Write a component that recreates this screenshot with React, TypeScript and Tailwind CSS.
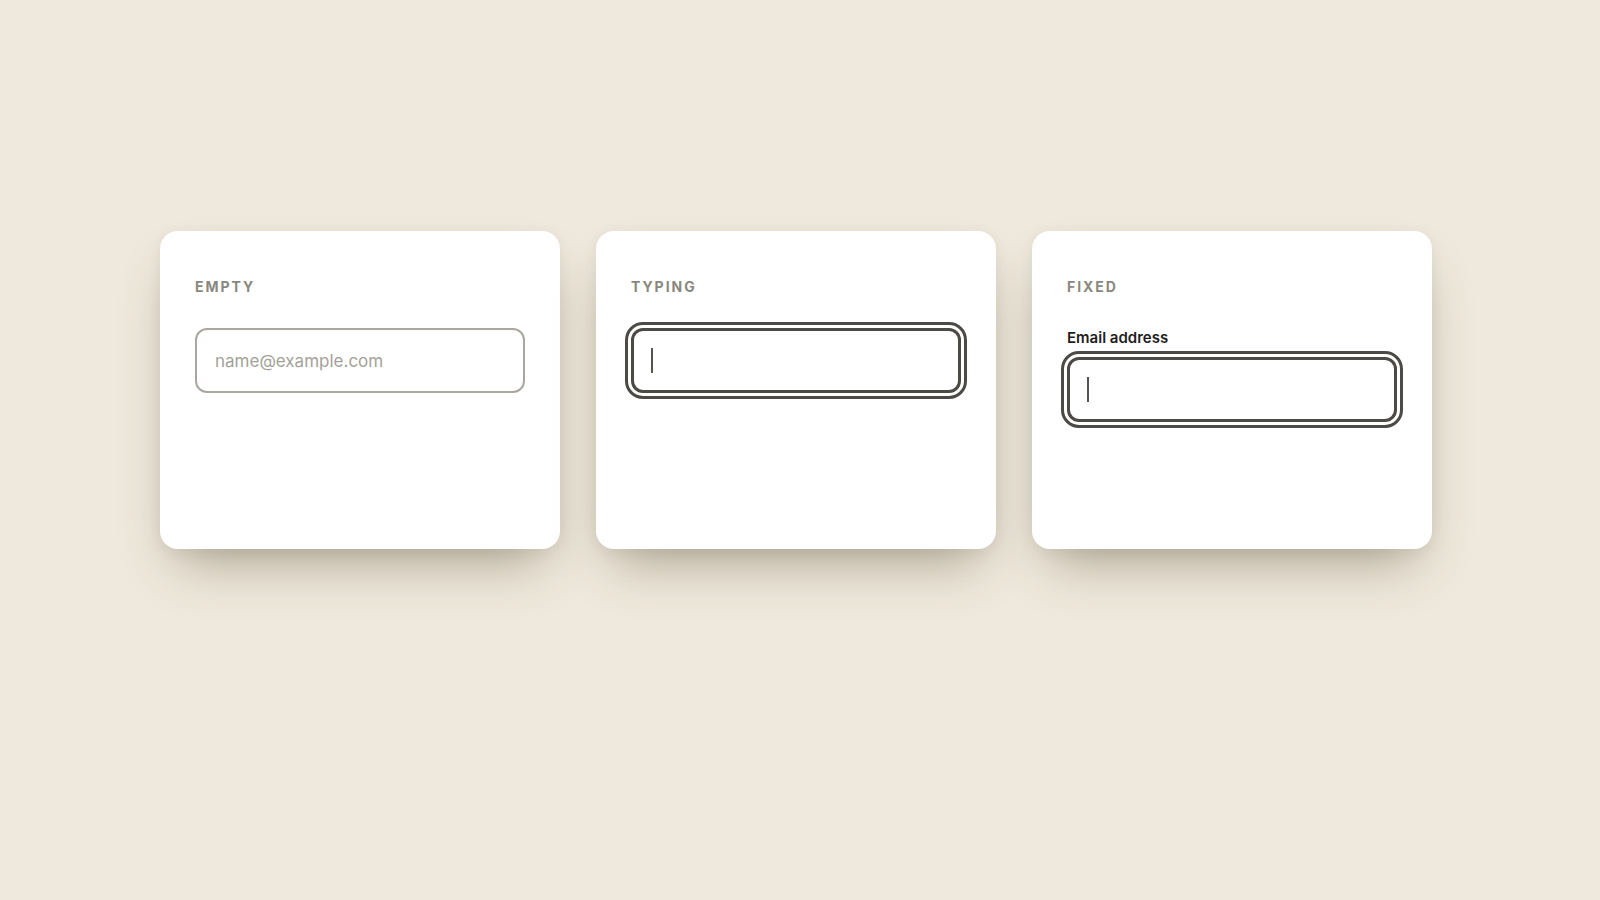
import React from "react";

type Variant = "empty" | "typing" | "fixed";

const CARDS: { id: Variant; title: string }[] = [
  { id: "empty", title: "Empty" },
  { id: "typing", title: "Typing" },
  { id: "fixed", title: "Fixed" },
];

function Caret() {
  return <span className="block h-[25px] w-[2px] bg-[#55544e]" />;
}

function FocusedField() {
  return (
    <div className="flex h-[65px] w-full items-center rounded-[12px] border-[3px] border-[#4b4a45] px-[17px] outline-[3px] outline-offset-[3px] outline-[#4b4a45] outline-solid">
      <Caret />
    </div>
  );
}

function Card({ id, title }: { id: Variant; title: string }) {
  return (
    <section className="h-[318px] w-[400px] shrink-0 rounded-[18px] bg-white px-[35px] pt-[46px] shadow-[0_28px_50px_-18px_rgba(80,70,45,0.45),0_4px_14px_rgba(90,80,60,0.08)]">
      <p className="mb-[31px] text-[14px] leading-[20px] font-bold tracking-[0.14em] text-[#8a887e] uppercase">
        {title}
      </p>

      {id === "empty" ? (
        <input
          readOnly
          type="email"
          placeholder="name@example.com"
          className="block h-[65px] w-full rounded-[12px] border-2 border-[#aaa89e] bg-white px-[18px] text-[17px] text-[#2c2b27] outline-none placeholder:text-[#a4a298]"
        />
      ) : null}

      {id === "typing" ? <FocusedField /> : null}

      {id === "fixed" ? (
        <>
          <label className="mb-[9px] block text-[15px] leading-[20px] font-semibold text-[#1f1e1b]">
            Email address
          </label>
          <FocusedField />
        </>
      ) : null}
    </section>
  );
}

export default function App() {
  return (
    <div className="min-h-screen bg-[#efe8dc] font-['Inter',sans-serif]">
      <div className="mx-auto flex w-[1280px] gap-[36px] pt-[231px]">
        {CARDS.map((card) => (
          <Card key={card.id} id={card.id} title={card.title} />
        ))}
      </div>
    </div>
  );
}
